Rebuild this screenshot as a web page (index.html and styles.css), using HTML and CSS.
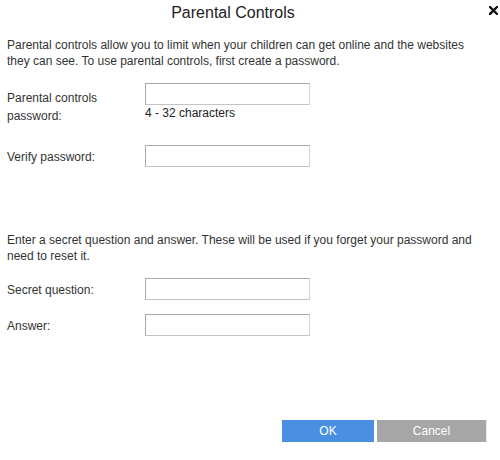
FILE: index.html
```html
<!DOCTYPE html>
<html>
<head>
<meta charset="utf-8">
<link rel="stylesheet" href="styles.css">
</head>
<body>
<div class="dialog">
  <div class="header">
    <div class="title">Parental Controls</div>
    <div class="close"><svg width="9" height="9" viewBox="0 0 9 9"><path d="M1 1 L8 8 M8 1 L1 8" stroke="#111" stroke-width="2.4" stroke-linecap="square"/></svg></div>
  </div>
  <p class="text intro">Parental controls allow you to limit when your children can get online and the websites they can see. To use parental controls, first create a password.</p>
  <div class="row row-pw">
    <label class="label label-pw">Parental controls password:</label>
    <div class="field">
      <input class="input" type="password">
      <div class="hint">4 - 32 characters</div>
    </div>
  </div>
  <div class="row row-verify">
    <label class="label label-verify">Verify password:</label>
    <div class="field"><input class="input" type="password"></div>
  </div>
  <p class="text secret">Enter a secret question and answer. These will be used if you forget your password and need to reset it.</p>
  <div class="row row-question">
    <label class="label label-center">Secret question:</label>
    <div class="field"><input class="input" type="text"></div>
  </div>
  <div class="row row-answer">
    <label class="label label-center">Answer:</label>
    <div class="field"><input class="input" type="text"></div>
  </div>
  <div class="footer">
    <button class="btn btn-ok">OK</button>
    <button class="btn btn-cancel">Cancel</button>
  </div>
</div>
</body>
</html>
```
FILE: styles.css
```css
html, body {
  margin: 0;
  padding: 0;
  background: #fff;
}
body {
  font-family: "Liberation Sans", Arial, sans-serif;
  font-size: 12px;
  color: #333;
}
.dialog {
  width: 500px;
  height: 460px;
  box-sizing: border-box;
  display: flex;
  flex-direction: column;
}
.header {
  display: flex;
  padding-top: 3px;
  height: 20px;
}
.title {
  flex: 1;
  text-align: center;
  font-size: 16px;
  line-height: 20px;
  color: #222;
}
.close {
  width: 34px;
  display: flex;
  justify-content: flex-end;
  padding-right: 2px;
  padding-top: 3px;
  box-sizing: border-box;
}
.close svg {
  display: block;
}
.text {
  margin: 0;
  padding: 0 7px;
  width: 468px;
  line-height: 16px;
}
.intro {
  margin-top: 14px;
}
.row {
  display: flex;
  padding-left: 7px;
}
.label {
  width: 138px;
  flex: none;
  line-height: 18px;
}
.row-pw {
  margin-top: 14px;
}
.label-pw {
  padding-top: 6px;
  width: 100px;
  margin-right: 38px;
}
.row-verify {
  margin-top: 20px;
}
.label-verify {
  padding-top: 3px;
}
.label-center {
  align-self: center;
  padding-top: 1px;
}
.field {
  display: flex;
  flex-direction: column;
}
.input {
  width: 165px;
  height: 22px;
  box-sizing: border-box;
  margin: 0;
  padding: 0 3px;
  border: 1px solid #a9a9a9;
  border-right-color: #d4d4d4;
  border-bottom-color: #c4c4c4;
  background: #fff;
  outline: none;
  font: inherit;
}
.hint {
  line-height: 16px;
  color: #222;
}
.secret {
  margin-top: 65px;
}
.row-question {
  margin-top: 14px;
}
.row-answer {
  margin-top: 14px;
}
.footer {
  margin-top: auto;
  margin-bottom: 18px;
  display: flex;
  justify-content: flex-end;
  gap: 3px;
  padding-right: 14px;
}
.btn {
  height: 22px;
  border: none;
  margin: 0;
  padding: 0;
  color: #fff;
  font-family: "Liberation Sans", Arial, sans-serif;
  font-size: 12px;
}
.btn-ok {
  width: 92px;
  background: #4a90e2;
}
.btn-cancel {
  width: 109px;
  background: #a6a6a6;
  box-shadow: 1px 0 0 #e6e6e6;
}
```
